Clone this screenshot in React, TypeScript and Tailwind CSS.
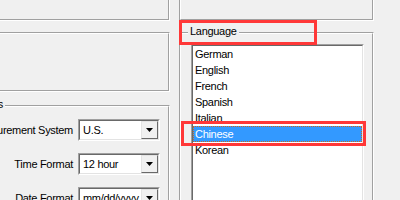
import React from "react";

function Combo({ value }: { value: string }) {
  return (
    <div className="w-[82px] h-[22px] border border-t-[#a0a0a0] border-l-[#a0a0a0] border-r-white border-b-white">
      <div className="h-full border border-t-[#696969] border-l-[#696969] border-r-[#e3e3e3] border-b-[#e3e3e3] bg-white flex">
        <span className="flex-1 pl-[3px] leading-[18px] whitespace-nowrap overflow-hidden">{value}</span>
        <div className="w-[17px] h-full shrink-0 bg-[#f0f0f0] border border-t-[#e3e3e3] border-l-[#e3e3e3] border-r-[#696969] border-b-[#696969] flex items-center justify-center">
          <svg width="7" height="4" viewBox="0 0 7 4">
            <path d="M0 0H7L3.5 4Z" fill="#000" />
          </svg>
        </div>
      </div>
    </div>
  );
}

function Row({ label, value }: { label: string; value: string }) {
  return (
    <div className="flex items-center shrink-0">
      <div className="w-[73px] flex justify-end whitespace-nowrap">{label}</div>
      <div className="ml-[5px]">
        <Combo value={value} />
      </div>
    </div>
  );
}

const items = ["German", "English", "French", "Spanish", "Italian", "Chinese", "Korean"];

export default function App() {
  return (
    <div className="relative w-[400px] h-[200px] overflow-hidden bg-[#f0f0f0] flex font-['Liberation_Sans',Arial,sans-serif] text-[11px] tracking-[-0.3px] text-black">
      {/* left column */}
      <div className="w-[170px] shrink-0 flex flex-col min-h-0">
        <div className="h-[21px] shrink-0 border-r border-b border-r-white border-b-white">
          <div className="h-full border-r border-b border-r-[#a0a0a0] border-b-[#a0a0a0]" />
        </div>
        <div className="mt-[11px] h-[60px] shrink-0 border-t border-r border-b border-t-[#a0a0a0] border-r-white border-b-white">
          <div className="h-full border-t border-r border-b border-t-white border-r-[#a0a0a0] border-b-[#a0a0a0]" />
        </div>
        <div className="relative mt-[13px] flex-1 min-h-0 border-t border-r border-t-[#a0a0a0] border-r-white">
          <span className="absolute right-[164px] top-[-8px] pr-[2px] bg-[#f0f0f0] leading-[13px] whitespace-nowrap">
            Settings
          </span>
          <div className="h-full overflow-hidden border-t border-r border-t-white border-r-[#a0a0a0] pt-[12px] flex flex-col gap-[12px]">
            <Row label="Measurement System" value="U.S." />
            <Row label="Time Format" value="12 hour" />
            <Row label="Date Format" value="mm/dd/yyyy" />
          </div>
        </div>
      </div>

      {/* right column */}
      <div className="flex-1 flex flex-col min-h-0 pl-[9px]">
        <div className="w-[195px] h-[21px] shrink-0 border-l border-r border-b border-l-[#a0a0a0] border-r-white border-b-white">
          <div className="h-full border-l border-r border-b border-l-white border-r-[#a0a0a0] border-b-[#a0a0a0]" />
        </div>
        <div className="relative w-[195px] mt-[11px] flex-1 min-h-0 border-t border-l border-r border-t-[#a0a0a0] border-l-[#a0a0a0] border-r-white">
          <span className="absolute left-[8px] top-[-8px] px-[2px] bg-[#f0f0f0] leading-[13px]">Language</span>
          <div className="h-full overflow-hidden border-t border-l border-r border-t-white border-l-white border-r-[#a0a0a0] pl-[10px] pt-[10px]">
            <div className="w-[173px] h-[200px] border border-t-[#a0a0a0] border-l-[#a0a0a0] border-r-white border-b-white">
              <div className="h-full border border-t-[#696969] border-l-[#696969] border-r-[#e3e3e3] border-b-[#e3e3e3] bg-white">
                {items.map((it) =>
                  it === "Chinese" ? (
                    <div
                      key={it}
                      className="h-[16px] leading-[14px] pl-[1px] bg-[#3399ff] text-white border border-dotted border-[#cc6a1a]"
                    >
                      {it}
                    </div>
                  ) : (
                    <div key={it} className="h-[16px] leading-[16px] pl-[2px]">
                      {it}
                    </div>
                  )
                )}
              </div>
            </div>
          </div>
        </div>
      </div>

      {/* annotation boxes */}
      <div className="absolute left-[179px] top-[20px] w-[138px] h-[25px] border-[3px] border-[#ff3838]" />
      <div className="absolute left-[181px] top-[121px] w-[185px] h-[25px] border-[3px] border-[#ff3838]" />
    </div>
  );
}
